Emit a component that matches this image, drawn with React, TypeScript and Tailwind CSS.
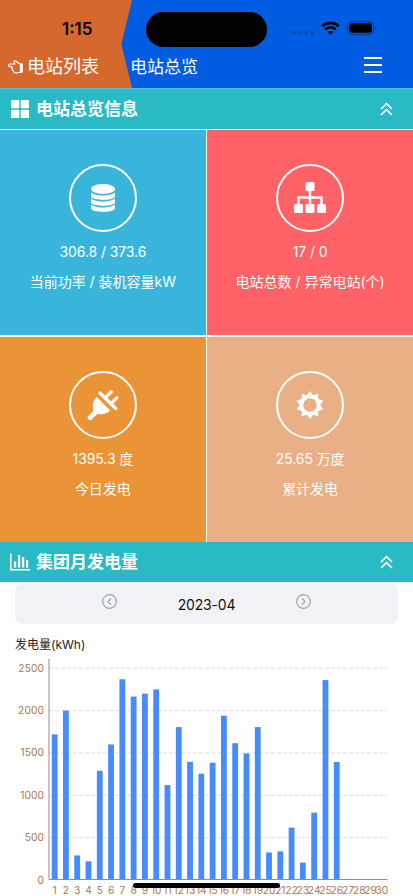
import type { ReactNode } from "react";

const generation = [
  1720, 2000, 290, 220, 1290, 1600, 2370, 2165, 2200, 2250, 1120, 1805, 1395, 1255, 1385,
  1940, 1615, 1495, 1805, 325, 338, 618, 205, 795, 2360, 1393, 0, 0, 0, 0,
];

const ticks = [0, 500, 1000, 1500, 2000, 2500];

function StatusBar() {
  return (
    <div className="flex h-[56px] items-center text-black">
      <div className="mt-[2px] w-[146px] pl-[62px] text-[17px] leading-none font-semibold">
        1:15
      </div>
      <div className="mt-[2px] h-[35px] w-[121px] rounded-full bg-black" />
      <div className="ml-[25px] mt-[9px] flex gap-[2px]">
        <i className="size-1 rounded-full bg-[#0848b8]" />
        <i className="size-1 rounded-full bg-[#0848b8]" />
        <i className="size-1 rounded-full bg-[#0848b8]" />
        <i className="size-1 rounded-full bg-[#0848b8]" />
      </div>
      <svg className="ml-[7px]" width="19" height="14" viewBox="0 0 19 14" fill="none" stroke="currentColor">
        <path d="M1.2 5.2a12 12 0 0 1 16.6 0" strokeWidth="2.7" />
        <path d="M4.2 8.4a7.6 7.6 0 0 1 10.6 0" strokeWidth="2.5" />
        <path d="M9.5 13.7 6.7 11a4 4 0 0 1 5.6 0z" fill="currentColor" stroke="none" />
      </svg>
      <svg className="ml-[7px]" width="31" height="14" viewBox="0 0 31 14">
        <rect x="0.6" y="0.6" width="26" height="12.8" rx="4" fill="none" stroke="#063d9c" strokeWidth="1.1" />
        <rect x="2.2" y="2.3" width="22.8" height="9.4" rx="2.6" />
        <path d="M28.2 4.8q3 2.2 0 4.4z" fill="#063d9c" />
      </svg>
    </div>
  );
}

const HandIcon = () => (
  <svg width="15" height="14" viewBox="0 0 15 14" fill="none" stroke="currentColor" strokeWidth="1.2" strokeLinejoin="round">
    <path d="M12.500 4.200C10.500 4 9.500 2.200 8 1.100 6.600.2 5.600 1.600 6.400 3L7 4H2C.2 4 .2 6.600 2 6.600h2.200c-1 .8-.6 2 .4 2.300-.5.9 0 1.900.9 2.100-.1 1.200.8 1.900 2 1.900h1.700c1.300 0 2-.8 3.300-.8z" />
    <rect x="12" y="3.500" width="2.800" height="9.200" rx="0.600" fill="currentColor" stroke="none" />
  </svg>
);

function Header() {
  return (
    <header className="relative h-[88px] bg-[#005ce1] text-white">
      <div className="absolute inset-y-0 left-0 w-[132px] bg-[#d5682c] [clip-path:polygon(0_0,100%_0,92%_50%,100%_100%,0_100%)]" />
      <div className="relative">
        <StatusBar />
        <div className="flex h-[21px] items-center">
          <div className="flex w-[130px] items-center gap-[4px] pl-[8px]">
            <HandIcon />
            <span className="text-[18px] leading-[21px]">电站列表</span>
          </div>
          <span className="mt-[2px] flex-1 text-[17px] leading-[21px]">电站总览</span>
          <button className="mr-[31px] mt-[-4px] flex flex-col gap-[5px]" aria-label="菜单">
            <span className="h-[2px] w-[18px] bg-white" />
            <span className="h-[2px] w-[18px] bg-white" />
            <span className="h-[2px] w-[18px] bg-white" />
          </button>
        </div>
      </div>
    </header>
  );
}

function SectionBar({ icon, title }: { icon: ReactNode; title: string }) {
  return (
    <div className="flex h-[39.500px] items-center bg-[#2abac5] pl-[10px] pr-[20px] text-white">
      <span className="w-[26px]">{icon}</span>
      <h2 className="flex-1 text-[17px] leading-[24px] font-bold">{title}</h2>
      <svg width="13" height="14" viewBox="0 0 13 14" fill="none" stroke="currentColor" strokeWidth="1.7">
        <path d="M1 7 6.5 1.6 12 7M1 13l5.500-5.400L12 13" />
      </svg>
    </div>
  );
}

function StatCard({ icon, value, label, className }: { icon: ReactNode; value: string; label: string; className: string }) {
  return (
    <div className={`flex flex-col items-center pt-[34px] text-[14px] leading-[20px] text-white ${className}`}>
      <div className="flex size-[68.500px] items-center justify-center rounded-full border-2 border-white">{icon}</div>
      <div className="mt-[10px] tracking-[-0.1px]">{value}</div>
      <div className="mt-[10px]">{label}</div>
    </div>
  );
}

const GridIcon = () => (
  <svg width="19" height="18" viewBox="0 0 19 18" fill="currentColor">
    <rect x="1" width="8.300" height="8.300" rx="1" />
    <rect x="10.700" width="8.300" height="8.300" rx="1" />
    <rect x="1" y="9.700" width="8.300" height="8.300" rx="1" />
    <rect x="10.700" y="9.700" width="8.300" height="8.300" rx="1" />
  </svg>
);

const BarsIcon = () => (
  <svg width="20" height="18" viewBox="0 0 20 18" fill="currentColor">
    <path d="M0 0.500h1.500V16H20v1.500H0zM4 8.500h2.200v6H4zM8 2h2.200v12.500H8zM12 4h2.200v10.500H12zM16 7h2.200v7.500H16z" />
  </svg>
);

const DatabaseIcon = () => (
  <svg width="24" height="28" viewBox="0 0 24 28" fill="currentColor">
    <ellipse cx="12" cy="5" rx="12" ry="5" />
    <path d="M0 8.500c4.500 4 19.500 4 24 0V12c0 5.200-24 5.200-24 0z" />
    <path d="M0 14.500c4.500 4 19.500 4 24 0V18c0 5.200-24 5.200-24 0z" />
    <path d="M0 20.500c4.500 4 19.500 4 24 0V24c0 5.200-24 5.200-24 0z" />
  </svg>
);

const SitemapIcon = () => (
  <svg width="32" height="31" viewBox="0 0 32 31" fill="currentColor">
    <rect x="11.500" width="9" height="9" rx="1.500" />
    <rect y="22" width="9" height="9" rx="1.500" />
    <rect x="11.500" y="22" width="9" height="9" rx="1.500" />
    <rect x="23" y="22" width="9" height="9" rx="1.500" />
    <path d="M4.500 23v-7.500h23V23M16 8v15" fill="none" stroke="currentColor" strokeWidth="2.400" />
  </svg>
);

const PlugIcon = () => (
  <svg width="32" height="32" viewBox="0 0 32 32" fill="currentColor">
    <path d="M9.800 8 23.200 21.600c-2.400 3-8.200 4.300-12.700 3.400L4.600 30.600a2 2 0 0 1-2.800 0l-.6-.6a2 2 0 0 1 0-2.800l5-5.200C4.800 16.500 6.400 11 9.800 8z" />
    <path d="m13 4 15.700 15.500M19.200 7.800l5-5M24.800 13.800l5-5" fill="none" stroke="currentColor" strokeWidth="3.300" strokeLinecap="round" />
  </svg>
);

const SunIcon = () => (
  <svg width="28" height="28" viewBox="-14 -14 28 28" fill="currentColor">
    <path
      fillRule="evenodd"
      d="M0-14 3.150-9.700 8.200-11.300 8.250-6 13.300-4.300 10.200 0 13.300 4.300 8.250 6 8.200 11.300 3.150 9.700 0 14-3.150 9.700-8.200 11.300-8.250 6-13.300 4.300-10.200 0-13.300-4.300-8.250-6-8.200-11.300-3.150-9.700zM6.800 0a6.800 6.800 0 1 0-13.600 0 6.800 6.800 0 0 0 13.600 0z"
    />
  </svg>
);

function MonthPicker() {
  return (
    <div className="mx-[15px] mt-[2.500px] flex h-[40px] items-center justify-between rounded-[8px] bg-[#f1f2f5] px-[87px] text-[14px] text-[#111]">
      <svg className="-mt-[5px]" width="15" height="15" viewBox="0 0 15 15" fill="none" stroke="#a0a5af" strokeWidth="1.200">
        <circle cx="7.500" cy="7.500" r="6.800" />
        <path d="M9 4.500l-3 3 3 3" />
      </svg>
      <span className="tracking-[-0.2px]">2023-04</span>
      <svg className="-mt-[5px]" width="15" height="15" viewBox="0 0 15 15" fill="none" stroke="#a0a5af" strokeWidth="1.200">
        <circle cx="7.500" cy="7.500" r="6.800" />
        <path d="M6 4.500l3 3-3 3" />
      </svg>
    </div>
  );
}

function GenerationChart() {
  const left = 49;
  const right = 387.500;
  const bottom = 225;
  const step = (right - left) / generation.length;
  const y = (v: number) => bottom - v * 0.0847;

  return (
    <svg className="block" width="413" height="241" viewBox="0 0 413 241" fontSize="10.200" fill="#a87850">
      {ticks.map((t) => (
        <g key={t}>
          {t > 0 && <path d={`M${left} ${y(t)}H${right}`} stroke="#dedee2" strokeDasharray="4 2" />}
          <text x="44" y={y(t) + 3.500} textAnchor="end" letterSpacing="0.100">{t}</text>
        </g>
      ))}
      {generation.map((v, i) => (
        <g key={i}>
          <rect x={left + step * (i + 0.5) - 2.900} y={y(v)} width="5.800" height={bottom - y(v)} fill="#468bff" />
          <text x={left + step * (i + 0.5)} y="238.800" textAnchor="middle">{i + 1}</text>
        </g>
      ))}
      <path d={`M49 4v220.500H${right}`} fill="none" stroke="#8e8e90" />
    </svg>
  );
}

export default function App() {
  return (
    <main className="relative h-[896px] w-[413px] overflow-hidden bg-white font-['Inter','Noto_Sans_CJK_SC',sans-serif]">
      <Header />
      <div className="border-t border-[#5bb9d8]">
        <SectionBar icon={<GridIcon />} title="电站总览信息" />
      </div>
      <section className="grid grid-cols-2 grid-rows-[205px_205px] gap-x-[1.500px] gap-y-[2px] pt-px pb-[0.500px]">
        <StatCard icon={<DatabaseIcon />} value="306.8 / 373.6" label="当前功率 / 装机容量kW" className="bg-[#39b5db]" />
        <StatCard icon={<SitemapIcon />} value="17 / 0" label="电站总数 / 异常电站(个)" className="bg-[#ff6267]" />
        <StatCard icon={<PlugIcon />} value="1395.3 度" label="今日发电" className="bg-[#ea9337]" />
        <StatCard icon={<SunIcon />} value="25.65 万度" label="累计发电" className="bg-[#eab085]" />
      </section>
      <SectionBar icon={<BarsIcon />} title="集团月发电量" />
      <MonthPicker />
      <div className="mt-[11px] h-[20px] pl-[15px] text-[12px] leading-[20px] text-[#222]">发电量(kWh)</div>
      <GenerationChart />
      <div className="absolute bottom-[8px] left-[133px] h-[5px] w-[147px] rounded-full bg-black" />
    </main>
  );
}
